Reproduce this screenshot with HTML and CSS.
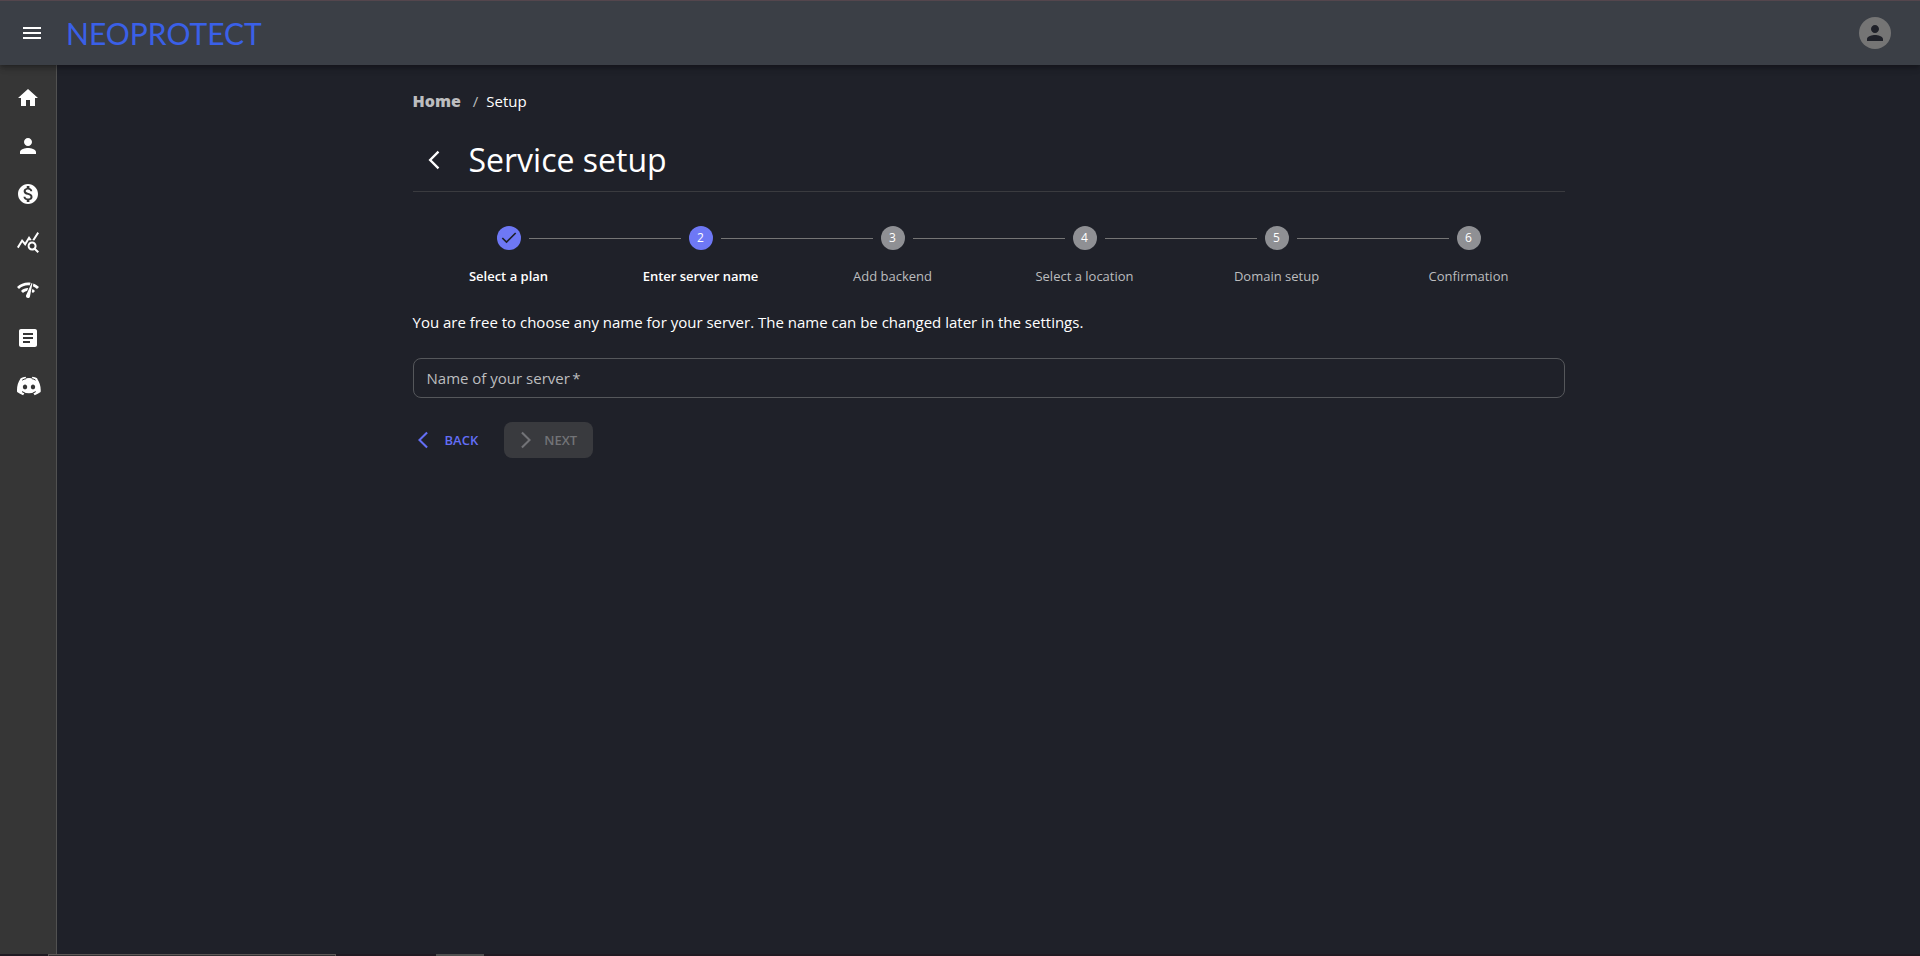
FILE: index.html
```
<!DOCTYPE html>
<html lang="en">
<head>
<meta charset="utf-8">
<title>NeoProtect - Service setup</title>
<link rel="stylesheet" href="styles.css">
</head>
<body>
<header class="topbar">
  <button class="icon-button" type="button" aria-label="Toggle menu">
    <svg class="icon" viewBox="0 0 24 24"><path d="M3 18h18v-2H3v2zm0-5h18v-2H3v2zm0-7v2h18V6H3z"/></svg>
  </button>
  <a class="brand" href="#">NEOPROTECT</a>
  <button class="avatar" type="button" aria-label="Account">
    <svg class="icon" viewBox="0 0 24 24"><path d="M12 12c2.21 0 4-1.79 4-4s-1.79-4-4-4-4 1.790-4 4 1.790 4 4 4zm0 2c-2.670 0-8 1.340-8 4v2h16v-2c0-2.660-5.330-4-8-4z"/></svg>
  </button>
</header>
<div class="layout">
  <nav class="sidebar" aria-label="Main">
    <a href="#" aria-label="Home"><svg class="icon" viewBox="0 0 24 24"><path d="M10 20v-6h4v6h5v-8h3L12 3 2 12h3v8z"/></svg></a>
    <a href="#" aria-label="Profile"><svg class="icon" viewBox="0 0 24 24"><path d="M12 12c2.21 0 4-1.790 4-4s-1.790-4-4-4-4 1.790-4 4 1.790 4 4 4zm0 2c-2.670 0-8 1.340-8 4v2h16v-2c0-2.660-5.330-4-8-4z"/></svg></a>
    <a href="#" aria-label="Billing"><svg class="icon" viewBox="0 0 24 24"><path d="M12 2C6.480 2 2 6.480 2 12s4.480 10 10 10 10-4.480 10-10S17.520 2 12 2zm1.410 16.090V20h-2.670v-1.930c-1.710-.36-3.160-1.460-3.270-3.400h1.960c.1 1.050.82 1.870 2.650 1.870 1.960 0 2.400-.98 2.400-1.590 0-.83-.44-1.610-2.670-2.140-2.480-.6-4.180-1.620-4.180-3.670 0-1.720 1.390-2.840 3.110-3.210V4h2.670v1.950c1.860.45 2.790 1.860 2.850 3.390H14.300c-.05-1.110-.64-1.870-2.220-1.870-1.500 0-2.400.68-2.400 1.640 0 .84.65 1.390 2.670 1.910s4.180 1.390 4.180 3.910c-.01 1.830-1.380 2.830-3.120 3.160z"/></svg></a>
    <a href="#" aria-label="Analytics"><svg class="icon" viewBox="0 0 24 24"><path d="M19.880 18.470c.44-.7.700-1.510.700-2.390 0-2.490-2.010-4.500-4.500-4.500s-4.500 2.010-4.500 4.500 2.010 4.500 4.490 4.500c.88 0 1.700-.26 2.390-.7L21.580 23 23 21.580l-3.120-3.110zm-3.800.110c-1.380 0-2.500-1.120-2.500-2.500s1.120-2.500 2.500-2.500 2.500 1.120 2.500 2.500-1.120 2.500-2.500 2.500zm-.36-8.500c-.74.020-1.450.18-2.100.45l-.55-.83-3.800 6.180-3.010-3.520-3.630 5.810L1 17l5-8 3 3.500L13 6l2.720 4.080zm2.590.5c-.64-.28-1.330-.45-2.050-.49L21.380 2 23 3.180l-4.690 7.400z"/></svg></a>
    <a href="#" aria-label="Network"><svg class="icon" viewBox="0 0 24 24"><path d="M15.900 5c-.17 0-.32.09-.41.23l-.07.15-5.180 11.650c-.16.290-.26.610-.26.960 0 1.110.900 2.010 2.010 2.010.960 0 1.770-.68 1.960-1.590l.01-.03L16.400 5.500c0-.28-.22-.5-.5-.5zM1 9l2 2c2.880-2.880 6.790-4.080 10.530-3.620l1.190-2.680C9.890 3.840 4.740 5.270 1 9zm20 2l2-2c-1.640-1.640-3.550-2.820-5.590-3.570l-.53 2.820c1.500.620 2.900 1.530 4.120 2.750zm-4 4l2-2c-.8-.8-1.700-1.420-2.660-1.890l-.55 2.920c.42.270.830.590 1.210.970zM5 13l2 2c1.130-1.130 2.560-1.790 4.030-2l1.280-2.880c-2.630-.08-5.300.870-7.310 2.880z"/></svg></a>
    <a href="#" aria-label="Documentation"><svg class="icon" viewBox="0 0 24 24"><path d="M19 3H5c-1.100 0-2 .9-2 2v14c0 1.100.9 2 2 2h14c1.100 0 2-.9 2-2V5c0-1.100-.9-2-2-2zm-5 14H7v-2h7v2zm3-4H7v-2h10v2zm0-4H7V7h10v2z"/></svg></a>
    <a href="#" aria-label="Discord"><svg class="icon discord" viewBox="-1 0 25 24"><path d="M20.317 4.370a19.791 19.791 0 0 0-4.885-1.515.074.074 0 0 0-.079.037c-.21.375-.444.865-.608 1.250a18.270 18.270 0 0 0-5.487 0 12.640 12.640 0 0 0-.617-1.250.077.077 0 0 0-.079-.037A19.736 19.736 0 0 0 3.677 4.370C.533 9.046-.32 13.580.099 18.058a.082.082 0 0 0 .031.057 19.900 19.900 0 0 0 5.993 3.030c.462-.63.874-1.295 1.226-1.994a13.107 13.107 0 0 1-1.872-.892l.372-.292c3.928 1.793 8.180 1.793 12.061 0l.373.292a12.299 12.299 0 0 1-1.873.892c.36.698.772 1.362 1.225 1.993a19.839 19.839 0 0 0 6.002-3.030c.5-5.177-.838-9.674-3.549-13.660zM8.020 15.330c-1.183 0-2.157-1.085-2.157-2.419s.956-2.419 2.157-2.419c1.210 0 2.176 1.096 2.157 2.420 0 1.333-.956 2.418-2.157 2.418zm7.975 0c-1.183 0-2.157-1.085-2.157-2.419s.955-2.419 2.157-2.419c1.210 0 2.176 1.096 2.157 2.420 0 1.333-.946 2.418-2.157 2.418z"/><path class="cut" d="M5.200 6.200Q7 5 9.300 4.600M18.600 6.200Q17 5 14.700 4.600M5 17.600l2.600 1.200M18.800 17.600l-2.600 1.200"/></svg></a>
  </nav>
  <main class="content">
    <nav aria-label="Breadcrumb">
      <ol class="breadcrumb">
        <li><a href="#">Home</a></li>
        <li aria-current="page">Setup</li>
      </ol>
    </nav>
    <div class="page-head">
      <a class="page-back" href="#" aria-label="Go back"><svg class="icon" viewBox="0 0 24 24"><path d="M17.770 3.770 16 2 6 12l10 10 1.770-1.770L9.540 12z"/></svg></a>
      <h1>Service setup</h1>
    </div>
    <ol class="stepper">
      <li class="step done"><span class="dot"><svg class="tick" viewBox="0 0 24 24"><path d="m4 12 5 5L20 6"/></svg></span><span class="label">Select a plan</span></li>
      <li class="step active" aria-current="step"><span class="dot">2</span><span class="label">Enter server name</span></li>
      <li class="step"><span class="dot">3</span><span class="label">Add backend</span></li>
      <li class="step"><span class="dot">4</span><span class="label">Select a location</span></li>
      <li class="step"><span class="dot">5</span><span class="label">Domain setup</span></li>
      <li class="step"><span class="dot">6</span><span class="label">Confirmation</span></li>
    </ol>
    <form class="form">
      <p class="hint">You are free to choose any name for your server. The name can be changed later in the settings.</p>
      <input class="field" type="text" aria-label="Name of your server" placeholder="Name of your server&#8201;*" required>
      <div class="actions">
        <button class="btn btn-text" type="button"><svg class="icon" viewBox="0 0 24 24"><path d="M17.770 3.770 16 2 6 12l10 10 1.770-1.770L9.540 12z"/></svg>BACK</button>
        <button class="btn btn-solid" type="submit" disabled><svg class="icon" viewBox="0 0 24 24"><path d="M6.230 20.230 8 22l10-10L8 2 6.230 3.770 14.460 12z"/></svg>NEXT</button>
      </div>
    </form>
  </main>
</div>
<footer class="dock"><span class="dock-window"></span><span class="dock-tab"></span></footer>
</body>
</html>
```
FILE: styles.css
```
* { box-sizing: border-box; }

body {
  margin: 0;
  min-height: 100vh;
  display: flex;
  flex-direction: column;
  background: #1f2129;
  color: #fff;
  font: 15px/24px "Open Sans", "Noto Sans", sans-serif;
}

a { color: inherit; text-decoration: none; }
ol { list-style: none; margin: 0; padding: 0; }
button { font: inherit; border: 0; padding: 0; color: inherit; background: none; }
.icon { display: block; width: 24px; height: 24px; fill: currentColor; }

.topbar {
  position: relative;
  display: flex;
  align-items: center;
  height: 65px;
  padding: 0 29px 0 20px;
  background: #3b3f46;
  border-top: 1px solid #54464d;
  box-shadow: 0 2px 4px -1px rgba(0, 0, 0, .2), 0 4px 5px rgba(0, 0, 0, .14), 0 1px 10px rgba(0, 0, 0, .12);
}
.brand {
  margin-left: 22px;
  color: #3a60e8;
  font: 30px/40px Lato, sans-serif;
}
.avatar {
  display: grid;
  place-items: center;
  width: 32px;
  height: 32px;
  margin-left: auto;
  border-radius: 50%;
  background: #757575;
  color: #1f2129;
}

.layout { flex: 1; display: flex; }
.sidebar {
  display: flex;
  flex-direction: column;
  gap: 24px;
  width: 57px;
  padding: 21px 16px;
  background: #363636;
  border-right: 1px solid #515151;
}
.discord { width: 25px; }
.cut { fill: none; stroke: #363636; stroke-width: 1; }
.content {
  width: 100%;
  max-width: 1152px;
  margin: 0 auto;
  padding-top: 24px;
}

.breadcrumb { display: flex; }
.breadcrumb a { color: #bcbdbf; font-size: 16px; font-weight: 800; }
.breadcrumb li + li::before { content: "/"; margin: 0 8px 0 12px; color: #bcbdbf; }

.page-head {
  display: flex;
  align-items: center;
  gap: 24px;
  margin-top: 16px;
  padding: 10px;
  border-bottom: 1px solid #3a3b3f;
}
.page-back .icon { width: 22px; height: 22px; }
h1 { margin: 0; font-size: 32px; line-height: 42px; font-weight: 400; }

.stepper { display: flex; margin-top: 34px; }
.step {
  position: relative;
  flex: 1;
  display: flex;
  flex-direction: column;
  align-items: center;
  gap: 16px;
  color: #bcbdbf;
  font-size: 13px;
  line-height: 20px;
}
.step + .step::before {
  content: "";
  position: absolute;
  top: 12px;
  left: calc(-50% + 20px);
  right: calc(50% + 20px);
  border-top: 1px solid #757575;
}
.dot {
  display: grid;
  place-items: center;
  width: 24px;
  height: 24px;
  border-radius: 50%;
  background: #8f9094;
  color: #fff;
  font-size: 12px;
}
.done, .active { color: #fff; }
.done .label, .active .label { font-weight: 600; }
.done .dot, .active .dot { background: #6e78f5; }
.tick { width: 20px; height: 20px; fill: none; stroke: #1f2129; stroke-width: 2; }

.form { margin-top: 24px; }
.hint { margin: 0 0 24px; }
.field {
  display: block;
  width: 100%;
  height: 40px;
  padding: 0 13px;
  border: 1px solid #55575b;
  border-radius: 8px;
  background: transparent;
  color: #fff;
  font: inherit;
}
.field::placeholder { color: #bcbdbf; opacity: 1; }

.actions { display: flex; gap: 18px; margin-top: 24px; }
.btn {
  display: flex;
  align-items: center;
  height: 36px;
  border-radius: 8px;
  font-size: 13px;
  font-weight: 600;
}
.btn .icon { width: 20px; height: 20px; }
.btn-text { gap: 12px; padding: 0 8px 0 0; color: #636ef5; }
.btn-solid { gap: 8px; padding: 0 16px 0 12px; background: #393a3e; color: #727377; }

.dock { display: flex; height: 2px; padding-left: 48px; background: #1f1a22; }
.dock-window { width: 288px; border: 1px solid #5d5857; border-bottom: 0; background: #333033; }
.dock-tab { width: 48px; margin-left: 100px; background: #505050; }
```
